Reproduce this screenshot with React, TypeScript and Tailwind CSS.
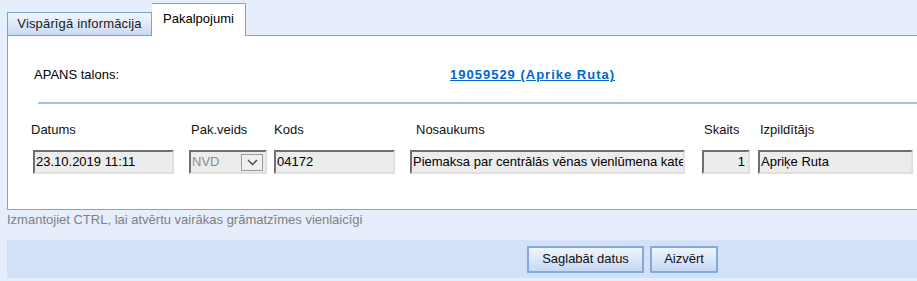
import React from "react";

const inputCls =
  "h-[24px] bg-[#ececec] border-2 border-t-[#6f6f6f] border-l-[#6f6f6f] border-b-[#e0e0e0] border-r-[#e0e0e0] px-[1px] text-[13px] flex items-center whitespace-nowrap overflow-hidden";

export default function App() {
  return (
    <div
      className="w-[917px] h-[281px] bg-[#e6edfb] overflow-hidden text-[13px] text-black"
      style={{ fontFamily: '"Liberation Sans", Arial, sans-serif' }}
    >
      {/* Tabs */}
      <div className="flex items-end pl-[7px] pt-[3px] h-[35px]">
        <div className="h-[23px] w-[145px] flex items-center justify-center border border-b-0 border-[#7ba3db] bg-gradient-to-b from-[#f4f7fd] to-[#c8daf6] text-[#1a1a1a] tracking-[0.15px]">
          Vispārīgā informācija
        </div>
        <div className="h-[33px] w-[94px] -mb-px relative z-10 flex items-center justify-center border border-b-0 border-[#7ba3db] border-l-0 bg-white pb-[2px]">
          Pakalpojumi
        </div>
      </div>
      {/* Panel */}
      <div className="ml-[7px] h-[175px] border border-r-0 border-[#7ba3db] bg-white">
        <div className="flex items-center h-[40px] mt-[19px]">
          <div className="ml-[26px] w-[416px]">APANS talons:</div>
          <a className="font-bold text-[#0066cc] underline tracking-[1px]" href="#">
            19059529 (Aprike Ruta)
          </a>
        </div>
        <div className="ml-[30px] h-[2px] bg-[#a5c2e8] mt-[7px]" />
        <div className="flex h-[24px] items-center mt-[14px] text-[#111]">
          <div className="ml-[23px] w-[160px]">Datums</div>
          <div className="w-[83px]">Pak.veids</div>
          <div className="w-[142px]">Kods</div>
          <div className="w-[288px]">Nosaukums</div>
          <div className="w-[56px]">Skaits</div>
          <div>Izpildītājs</div>
        </div>
        <div className="flex items-center mt-[8px]">
          <div className={inputCls + " text-black ml-[25px] w-[141px]"}>23.10.2019 11:11</div>
          <div className={inputCls + " text-[#8c8c8c] ml-[15px] w-[78px] justify-between pr-[2px]"}>
            <span>NVD</span>
            <span className="w-[22px] h-[17px] border border-[#9a9a9a] bg-[#f0f0f0] flex items-center justify-center">
              <svg width="11" height="7" viewBox="0 0 11 7">
                <path d="M1 1 L5.5 5.5 L10 1" fill="none" stroke="#444" strokeWidth="1.3" />
              </svg>
            </span>
          </div>
          <div className={inputCls + " text-black ml-[7px] w-[121px]"}>04172</div>
          <div className={inputCls + " text-black ml-[15px] w-[275px]"}>
            Piemaksa par centrālās vēnas vienlūmena katetra ievadīšanu
          </div>
          <div className={inputCls + " text-black ml-[17px] w-[48px] justify-end pr-[3px]"}>1</div>
          <div className={inputCls + " text-black ml-[8px] w-[155px]"}>Apriķe Ruta</div>
        </div>
      </div>
      {/* Hint */}
      <div className="pl-[7px] h-[20px] flex items-center text-[#808080]">
        Izmantojiet CTRL, lai atvērtu vairākas grāmatzīmes vienlaicīgi
      </div>
      {/* Footer */}
      <div className="ml-[7px] mt-[10px] h-[38px] bg-[#d2e0f8] flex items-center pl-[520px] gap-[6px]">
        <button className="h-[27px] w-[117px] border-2 border-[#86a9dd] bg-gradient-to-b from-[#f0f5fd] to-[#c6d8f5] text-[#111]">
          Saglabāt datus
        </button>
        <button className="h-[27px] w-[68px] border-2 border-[#86a9dd] bg-gradient-to-b from-[#f0f5fd] to-[#c6d8f5] text-[#111]">
          Aizvērt
        </button>
      </div>
    </div>
  );
}
